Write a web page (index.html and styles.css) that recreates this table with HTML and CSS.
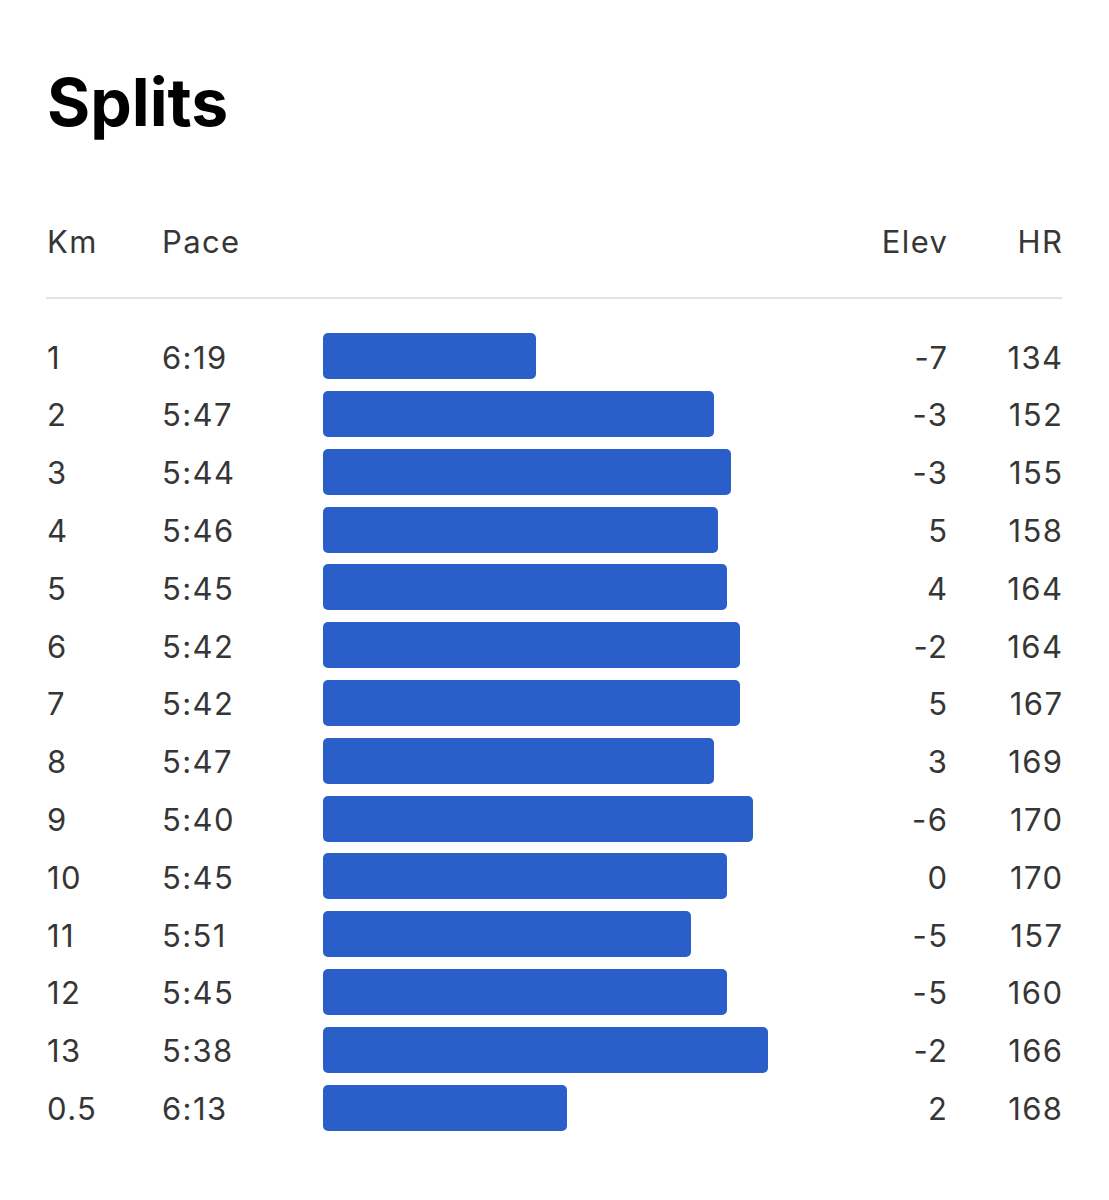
FILE: index.html
```html
<!DOCTYPE html>
<html lang="en">
<head>
<meta charset="utf-8">
<title>Splits</title>
<link rel="stylesheet" href="styles.css">
</head>
<body>
<main class="page">
  <h1 class="title">Splits</h1>
  <div class="row head">
    <div>Km</div><div>Pace</div><div></div><div class="num">Elev</div><div class="num">HR</div>
  </div>
  <div class="rule"></div>
  <div class="rows">
    <div class="row"><div>1</div><div>6:19</div><div class="barcell"><div class="bar" style="width:213px"></div></div><div class="num">-7</div><div class="num">134</div></div>
    <div class="row"><div>2</div><div>5:47</div><div class="barcell"><div class="bar" style="width:391px"></div></div><div class="num">-3</div><div class="num">152</div></div>
    <div class="row"><div>3</div><div>5:44</div><div class="barcell"><div class="bar" style="width:408px"></div></div><div class="num">-3</div><div class="num">155</div></div>
    <div class="row"><div>4</div><div>5:46</div><div class="barcell"><div class="bar" style="width:395px"></div></div><div class="num">5</div><div class="num">158</div></div>
    <div class="row"><div>5</div><div>5:45</div><div class="barcell"><div class="bar" style="width:404px"></div></div><div class="num">4</div><div class="num">164</div></div>
    <div class="row"><div>6</div><div>5:42</div><div class="barcell"><div class="bar" style="width:417px"></div></div><div class="num">-2</div><div class="num">164</div></div>
    <div class="row"><div>7</div><div>5:42</div><div class="barcell"><div class="bar" style="width:417px"></div></div><div class="num">5</div><div class="num">167</div></div>
    <div class="row"><div>8</div><div>5:47</div><div class="barcell"><div class="bar" style="width:391px"></div></div><div class="num">3</div><div class="num">169</div></div>
    <div class="row"><div>9</div><div>5:40</div><div class="barcell"><div class="bar" style="width:430px"></div></div><div class="num">-6</div><div class="num">170</div></div>
    <div class="row"><div>10</div><div>5:45</div><div class="barcell"><div class="bar" style="width:404px"></div></div><div class="num">0</div><div class="num">170</div></div>
    <div class="row"><div>11</div><div>5:51</div><div class="barcell"><div class="bar" style="width:368px"></div></div><div class="num">-5</div><div class="num">157</div></div>
    <div class="row"><div>12</div><div>5:45</div><div class="barcell"><div class="bar" style="width:404px"></div></div><div class="num">-5</div><div class="num">160</div></div>
    <div class="row"><div>13</div><div>5:38</div><div class="barcell"><div class="bar" style="width:445px"></div></div><div class="num">-2</div><div class="num">166</div></div>
    <div class="row"><div>0.5</div><div>6:13</div><div class="barcell"><div class="bar" style="width:244px"></div></div><div class="num">2</div><div class="num">168</div></div>
  </div>
</main>
</body>
</html>
```

FILE: styles.css
```css
html, body {
  margin: 0;
  padding: 0;
  background: #ffffff;
}

body {
  font-family: Inter, "Noto Sans", "Liberation Sans", sans-serif;
  color: #363636;
}

.page {
  width: 1016px;
  margin-left: 46px;
  padding-top: 70px;
}

.title {
  margin: 0;
  font-size: 66px;
  line-height: 64px;
  font-weight: 700;
  color: #000000;
  padding-left: 1px;
  letter-spacing: 0;
}

.row {
  display: grid;
  grid-template-columns: 116px 161px 1fr 120px 115px;
  align-items: center;
  height: 57.8px;
  font-size: 31px;
  line-height: 36px;
  letter-spacing: 1.4px;
}

.row > div:first-child {
  padding-left: 1px;
}

.head {
  margin-top: 79px;
}

.rule {
  height: 2px;
  background: #e2e2e2;
  margin-top: 26px;
  margin-bottom: 30px;
}

.num {
  text-align: right;
  margin-right: -1.4px;
}

.barcell {
  display: flex;
  align-items: center;
  height: 100%;
}

.bar {
  height: 46px;
  background: #2a5fc9;
  border-radius: 5px;
  margin-top: -3px;
}
```
